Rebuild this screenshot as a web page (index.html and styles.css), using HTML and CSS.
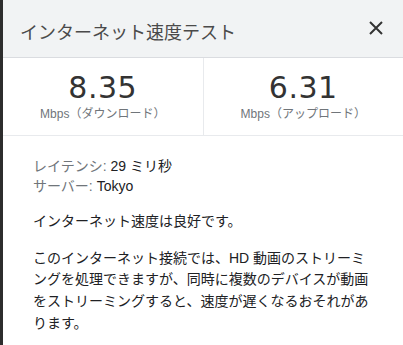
FILE: index.html
```html
<!DOCTYPE html>
<html lang="ja">
<head>
    <meta charset="UTF-8">
    <meta name="viewport" content="width=device-width, initial-scale=1.0">
    <title>インターネット速度テスト</title>
    <link rel="stylesheet" href="styles.css">
</head>
<body>
    <div class="backdrop"></div>
    <div class="dialog">
        <div class="header">
            <h1 class="title">インターネット速度テスト</h1>
            <button class="close" aria-label="閉じる">
                <svg width="14" height="14" viewBox="0 0 14 14">
                    <path d="M1 1 L13 13 M13 1 L1 13" stroke="#333" stroke-width="2" fill="none"/>
                </svg>
            </button>
        </div>

        <div class="stats">
            <div class="stat">
                <div class="value">8.35</div>
                <div class="unit">Mbps（ダウンロード）</div>
            </div>
            <div class="stat">
                <div class="value">6.31</div>
                <div class="unit">Mbps（アップロード）</div>
            </div>
        </div>

        <div class="content">
            <div class="details">
                <div><span class="label">レイテンシ:</span> 29 ミリ秒</div>
                <div><span class="label">サーバー:</span> Tokyo</div>
            </div>
            <p>インターネット速度は良好です。</p>
            <p>このインターネット接続では、HD 動画のストリーミングを処理できますが、同時に複数のデバイスが動画をストリーミングすると、速度が遅くなるおそれがあります。</p>
        </div>
    </div>
</body>
</html>
```

FILE: styles.css
```css
body {
    margin: 0;
    display: flex;
    height: 345px;
    overflow: hidden;
    font-family: "Liberation Sans", "Noto Sans CJK JP", sans-serif;
    color: #202124;
    background-color: #fff;
}
.backdrop {
    width: 3px;
    background-color: #2d2d2d;
}
.dialog {
    flex: 1;
    background-color: #fff;
}
.header {
    height: 57px;
    display: flex;
    justify-content: space-between;
    align-items: flex-start;
    background-color: #f1f3f4;
    border-bottom: 1px solid #dadce0;
}
.title {
    margin: 0;
    padding: 21px 0 0 17px;
    font-size: 18px;
    font-weight: normal;
    line-height: 24px;
    color: #4a4a4a;
}
.close {
    margin: 16px 15px 0 0;
    width: 24px;
    height: 24px;
    padding: 0;
    border: none;
    background: transparent;
    display: flex;
    align-items: center;
    justify-content: center;
    cursor: pointer;
}
.stats {
    display: flex;
    border-bottom: 1px solid #e8eaed;
}
.stat {
    flex: 1;
    text-align: center;
    padding: 12px 0 13px;
}
.stat + .stat {
    border-left: 1px solid #e8eaed;
}
.value {
    font-family: "DejaVu Sans", sans-serif;
    font-size: 30px;
    line-height: 36px;
    letter-spacing: 0.5px;
    color: #333;
}
.unit {
    font-size: 12px;
    line-height: 16px;
    color: #70757a;
}
.content {
    padding: 20px 30px 0 30px;
    font-size: 14px;
}
.details {
    line-height: 20px;
}
.label {
    color: #70757a;
}
p {
    margin: 15px 0 0;
    line-height: 21.7px;
}
```
